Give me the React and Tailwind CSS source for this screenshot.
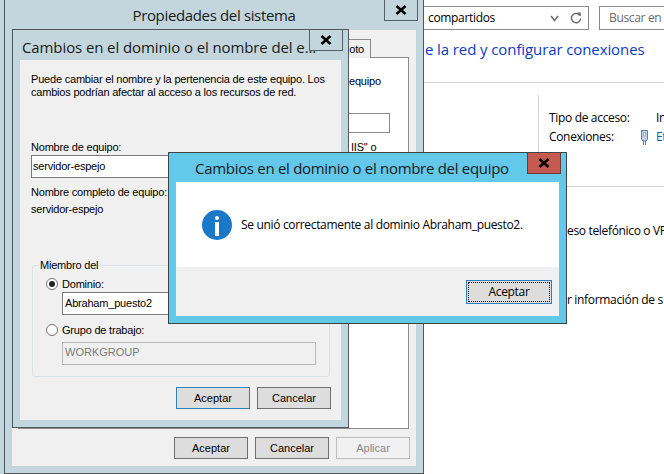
import React from 'react';

const btn = "flex items-center justify-center w-[74px] h-[22px] border border-[#707070] bg-[#dddddd] text-[11px] tracking-normal text-black font-['Liberation_Sans',sans-serif]";

const CloseX = ({ className }) => (
  <svg width="12" height="10" viewBox="0 0 12 10" className={className}>
    <path d="M1.5 1 L10.5 9 M10.5 1 L1.5 9" stroke="currentColor" strokeWidth="2.6" />
  </svg>
);

const CloseButton = ({ red }) => (
  <div className={`absolute top-0 right-[5px] flex items-center justify-center w-[34px] h-[21px] border border-t-0 text-black ${red ? 'bg-[#c75a50] border-[#6b3a36]' : 'border-[#566066]'}`}>
    <CloseX />
  </div>
);

const Radio = ({ checked }) => (
  <span className="flex items-center justify-center w-[12px] h-[12px] rounded-full border border-[#707070] bg-white">
    {checked && <span className="w-[6px] h-[6px] rounded-full bg-[#222222]" />}
  </span>
);

const BackgroundWindow = () => (
  <div className="absolute left-[424px] top-0 w-[240px] h-[474px] overflow-hidden bg-white text-[12px] tracking-[-0.33px] text-black whitespace-nowrap">
    <div className="h-[83px] border-b border-[#d5d5d5]">
      <div className="flex gap-[10px] pt-[6px]">
        <div className="flex shrink-0 items-center justify-between w-[165px] h-[24px] border border-l-0 border-[#8a8a8a] pl-[4px] pr-[6px]">
          <span>compartidos</span>
          <div className="flex items-center gap-[11px] text-[#707070]">
            <svg width="9" height="7" viewBox="0 0 9 7"><path d="M1 1 L4.5 5.5 L8 1" fill="none" stroke="currentColor" strokeWidth="1.6" /></svg>
            <svg width="12" height="12" viewBox="0 0 12 12"><path d="M9.8 3.5 A4.6 4.6 0 1 0 10.6 6.5" fill="none" stroke="currentColor" strokeWidth="1.5" /><path d="M7 0.5 L10.8 0.5 L10.8 4.5 Z" fill="currentColor" /></svg>
          </div>
        </div>
        <div className="flex shrink-0 items-center w-[80px] h-[24px] border border-[#8a8a8a] pl-[9px] text-[#6d6d6d]">Buscar en el</div>
      </div>
      <div className="mt-[9px] pl-[1px] text-[15px] tracking-[-0.1px] leading-[20px] text-[#0a3cc2]">e la red y configurar conexiones</div>
    </div>
    <div className="flex h-[104px] border-b border-[#d5d5d5]">
      <div className="w-[114px] shrink-0" />
      <div className="mt-[12px] border-l border-[#d5d5d5] pl-[10px] pt-[13px]">
        <div className="flex h-[19px] items-center">
          <span className="w-[107px]">Tipo de acceso:</span>
          <span>In</span>
        </div>
        <div className="flex h-[19px] items-center">
          <span className="w-[91px]">Conexiones:</span>
          <svg width="9" height="16" viewBox="0 0 9 16" className="mr-[7px]">
            <path d="M1.5 1.5 H7.5 V10 L6 12 H3 L1.5 10 Z" fill="#c3d3e6" stroke="#5f7f9e" />
            <path d="M3.5 3.5 H5.5 V7 H3.5 Z" fill="#f5f8fb" stroke="#7f97ad" strokeWidth="0.7" />
            <path d="M3.5 12 V16 M5.5 12 V16" stroke="#3f88c5" />
          </svg>
          <span className="text-[#0a5fb4]">Et</span>
        </div>
      </div>
    </div>
    <div className="ml-[143px] mt-[35px] leading-[18px]">eso telefónico o VP</div>
    <div className="ml-[143px] mt-[51px] leading-[18px]">r información de s</div>
  </div>
);

const SystemProperties = () => (
  <div className="absolute left-[4px] top-[-1px] w-[420px] h-[475px] border border-[#50585c] bg-[#c3d6dd]">
    <div className="flex items-center justify-center h-[30px] pt-[1px] text-[15px] tracking-[-0.35px] text-[#1a1a1a]">Propiedades del sistema</div>
    <CloseButton />
    <div className="relative mx-[7px] h-[436px] bg-[#f0f0f0]">
      <div className="absolute left-[6px] top-[27px] w-[391px] h-[372px] border border-[#8c8c8c] bg-white text-[11px] tracking-[-0.2px] text-black font-['Liberation_Sans',sans-serif]">
        <div className="absolute right-[37px] top-[-19px] flex items-end justify-end w-[40px] h-[19px] border border-b-0 border-[#8c8c8c] bg-[#f0f0f0] pr-[6px] pb-[1px]">moto</div>
        <div className="pl-[330px] pt-[16px] leading-[14px] whitespace-nowrap">equipo</div>
        <div className="ml-[320px] mt-[25px] w-[51px] h-[20px] border border-[#8c8c8c]" />
        <div className="pl-[332px] mt-[7px] leading-[14px] whitespace-nowrap">IIS" o</div>
      </div>
      <div className="absolute right-[6px] bottom-[7px] flex gap-[7px]">
        <div className={btn}>Aceptar</div>
        <div className={btn}>Cancelar</div>
        <div className={`${btn} !border-[#bcbcbc] !bg-[#f0f0f0] !text-[#8a8a8a]`}>Aplicar</div>
      </div>
    </div>
  </div>
);

const ChangeNameDialog = () => (
  <div className="absolute left-[12px] top-[29px] w-[337px] h-[399px] border border-[#50585c] bg-[#c3d6dd] text-[11px] text-black">
    <div className="h-[30px] pl-[9px] pt-[4px] text-[15px] tracking-[-0.1px] leading-[26px] text-[#1a1a1a] whitespace-nowrap">Cambios en el dominio o el nombre del e...</div>
    <CloseButton />
    <div className="mx-[7px] h-[360px] bg-[#f0f0f0] pl-[11px] pt-[13px] tracking-[-0.2px] whitespace-nowrap font-['Liberation_Sans',sans-serif]">
      <div className="leading-[13px]">Puede cambiar el nombre y la pertenencia de este equipo. Los</div>
      <div className="leading-[13px]">cambios podrían afectar al acceso a los recursos de red.</div>
      <div className="mt-[41px] leading-[14px]">Nombre de equipo:</div>
      <div className="flex items-center mt-[1px] w-[298px] h-[23px] border border-[#7a7a7a] bg-white pl-[1px]">servidor-espejo</div>
      <div className="mt-[7px] leading-[14px]">Nombre completo de equipo:</div>
      <div className="mt-[3px] leading-[14px]">servidor-espejo</div>
      <div className="relative ml-[1px] mt-[49px] w-[298px] h-[112px] rounded-[3px] border border-[#d9e3ea] pl-[13px] pt-[11px]">
        <span className="absolute left-[6px] top-[-8px] bg-[#f0f0f0] px-[1px] leading-[14px]">Miembro del</span>
        <div className="flex items-center gap-[4px] h-[14px]"><Radio checked /><span>Dominio:</span></div>
        <div className="flex items-center ml-[16px] mt-[1px] w-[254px] h-[23px] border border-[#7a7a7a] bg-white pl-[2px]">Abraham_puesto2</div>
        <div className="flex items-center gap-[4px] h-[14px] mt-[8px]"><Radio /><span className="pt-[1px]">Grupo de trabajo:</span></div>
        <div className="flex items-center ml-[16px] mt-[5px] w-[254px] h-[23px] border border-[#b8b8b8] bg-[#f0f0f0] pl-[2px] pb-[3px] tracking-normal text-[#7a7a7a]">WORKGROUP</div>
      </div>
      <div className="flex gap-[7px] ml-[145px] mt-[10px]">
        <div className={`${btn} !border-[#2f7fb8]`}>Aceptar</div>
        <div className={btn}>Cancelar</div>
      </div>
    </div>
  </div>
);

const SuccessDialog = () => (
  <div className="absolute left-[168px] top-[152px] w-[399px] h-[172px] border border-[#3c4448] bg-[#63c8ea] text-[12px] tracking-[-0.33px] text-black">
    <div className="flex items-center h-[29px] pt-[2px] pl-[26px] text-[15px] tracking-[-0.3px] text-[#1a1a1a]">Cambios en el dominio o el nombre del equipo</div>
    <CloseButton red />
    <div className="mx-[7px]">
      <div className="flex items-center h-[85px] bg-white pl-[26px] gap-[9px]">
        <svg width="30" height="30" viewBox="0 0 30 30">
          <circle cx="15" cy="15" r="15" fill="#1a78c8" />
          <circle cx="15" cy="8" r="2" fill="white" />
          <rect x="13" y="12" width="4" height="14" fill="white" />
        </svg>
        <span>Se unió correctamente al dominio Abraham_puesto2.</span>
      </div>
      <div className="flex justify-end h-[49px] bg-[#f0f0f0] pt-[13px] pr-[7px]">
        <div className="flex items-center justify-center w-[86px] h-[24px] border border-[#2f7fb8] bg-[#dddddd] outline-1 outline-dotted outline-offset-[-3px] outline-black">Aceptar</div>
      </div>
    </div>
  </div>
);

export default function App() {
  return (
    <div className="relative w-[664px] h-[474px] overflow-hidden bg-[#c3d6dd] font-['Open_Sans',sans-serif]">
      <BackgroundWindow />
      <SystemProperties />
      <ChangeNameDialog />
      <SuccessDialog />
    </div>
  );
}
